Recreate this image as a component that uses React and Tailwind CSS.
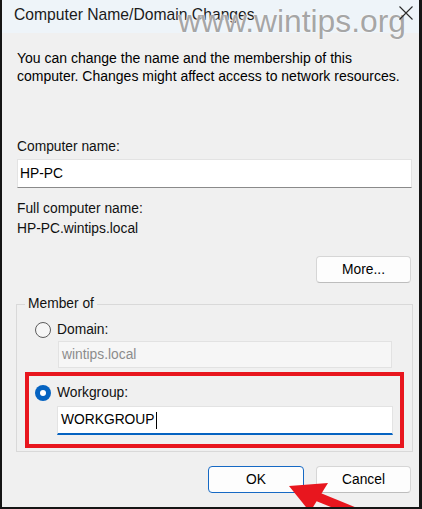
export default function App() {
  return (
    <div className="w-[422px] h-[509px] bg-[#151515] pl-[2px] pr-[3px] pb-[2px] flex font-['Liberation_Sans',Arial,sans-serif]">
      <div className="relative flex-1 flex flex-col bg-[#f0f0f0] overflow-hidden">
        {/* Title bar */}
        <div className="relative h-[33px] shrink-0 bg-[#eef4f9] flex items-start pt-[5px] pl-[12px]">
          <span className="text-[15.7px] leading-[20px] text-[#1b1b1b] whitespace-nowrap">Computer Name/Domain Changes</span>
          <span className="absolute top-[5px] left-[176px] text-[31.8px] leading-[32px] text-[#a6a6a6] whitespace-nowrap [text-shadow:0_0_1px_#fff,0_0_2px_#fff]">www.wintips.org</span>
          <svg className="absolute top-[6px] left-[397px]" width="14" height="14" viewBox="0 0 14 14">
            <path d="M0.5 0.5 L13.5 13.5 M13.5 0.5 L0.5 13.5" stroke="#2a2a2a" strokeWidth="1.1" fill="none" />
          </svg>
        </div>

        <div className="flex flex-col pl-[14px] pr-[6px] text-[13.8px] leading-[18px] text-[#111]">
          <div className="mt-[16px] pl-[1px] text-black text-[14px]">
            <div className="whitespace-nowrap">You can change the name and the membership of this</div>
            <div className="whitespace-nowrap">computer. Changes might affect access to network resources.</div>
          </div>

          <div className="mt-[53px] pl-[1px]">Computer name:</div>
          <div className="mt-[3px] mx-[1px] h-[29px] bg-white border border-[#e3e3e3] border-b-[#8a8a8a] flex items-center pl-[2px] text-black">
            HP-PC
          </div>

          <div className="mt-[11px] pl-[1px] leading-[20px]">Full computer name:</div>
          <div className="pl-[1px] leading-[20px]">HP-PC.wintips.local</div>

          <button className="mt-[17px] self-end mr-[2px] w-[95px] h-[27px] rounded-[4px] bg-[#fdfdfd] border border-[#d6d6d6] border-b-[#bdbdbd] text-[13.8px] text-black flex items-center justify-center">
            More...
          </button>

          <fieldset className="mt-[12px] border border-[#d9d9d9] px-[8px] pb-[3px]">
            <legend className="ml-[0px] px-[3px] leading-[18px] text-[#111]">Member of</legend>
            <div className="flex flex-col">
              <div className="mt-[8px] h-[18px] flex items-center">
                <div className="ml-[10px] w-[16px] h-[16px] rounded-full border border-[#5c5c5c] bg-[#f6f6f6]" />
                <span className="ml-[6px]">Domain:</span>
              </div>
              <div className="mt-[2px] ml-[33px] w-[334px] h-[27px] bg-[#f6f6f6] border border-[#e2e2e2] flex items-center pl-[3px] text-[#8c8c8c]">
                wintips.local
              </div>

              <div className="mt-[4px] h-[76px] border-4 border-[#e8161e] flex flex-col">
                <div className="mt-[8px] h-[18px] flex items-center">
                  <div className="ml-[6px] w-[16px] h-[16px] rounded-full bg-[#0563c1] flex items-center justify-center">
                    <div className="w-[6px] h-[6px] rounded-full bg-white" />
                  </div>
                  <span className="ml-[6px]">Workgroup:</span>
                </div>
                <div className="mt-[4px] ml-[28px] mr-[7px] h-[29px] bg-white border border-[#e3e3e3] border-b-2 border-b-[#0563c1] flex items-center pl-[3px] text-black">
                  <span>WORKGROUP</span>
                  <span className="ml-[1px] w-[1px] h-[17px] bg-black" />
                </div>
              </div>
            </div>
          </fieldset>

          <div className="mt-[14px] mr-[2px] flex justify-end gap-[12px]">
            <button className="w-[96px] h-[27px] rounded-[4px] bg-[#fdfdfd] border border-[#1669c4] text-[13.8px] text-black flex items-center justify-center">
              OK
            </button>
            <button className="w-[95px] h-[27px] rounded-[4px] bg-[#fdfdfd] border border-[#d6d6d6] border-b-[#bdbdbd] text-[13.8px] text-black flex items-center justify-center">
              Cancel
            </button>
          </div>
        </div>

        {/* Red arrow annotation */}
        <svg className="absolute left-0 top-0 pointer-events-none" width="417" height="507" viewBox="2 0 417 507">
          <line x1="306" y1="492" x2="382" y2="523" stroke="#e8161e" strokeWidth="9" />
          <polygon points="289,486 328,483 310,512" fill="#e8161e" />
        </svg>
      </div>
    </div>
  );
}
